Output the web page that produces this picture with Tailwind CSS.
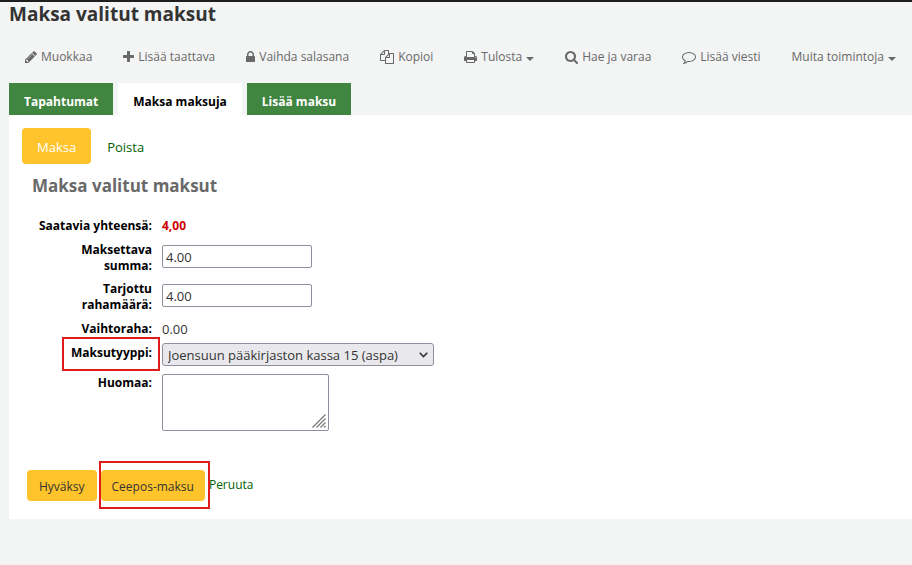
<!DOCTYPE html>
<html lang="fi">
<head>
<meta charset="utf-8">
<meta name="viewport" content="width=device-width, initial-scale=1">
<title>Maksa valitut maksut</title>
<script src="https://cdn.jsdelivr.net/npm/@tailwindcss/browser@4"></script>
</head>
<body class="min-h-screen border-t-2 border-[#1e1e1e] bg-[#f3f4f4] pl-[9px] font-['Open_Sans','Noto_Sans',sans-serif] text-[13px] leading-4 text-[#333]">
<h1 class="text-[19px] leading-6 font-bold">Maksa valitut maksut</h1>

<nav aria-label="Toiminnot" class="mt-[21px] flex gap-[31px] pl-4 text-xs leading-5 whitespace-nowrap text-[#696969]">
  <a href="#" class="flex items-center gap-1"><svg class="h-[14px] w-3" viewBox="128 0 1536 1792" fill="currentColor" aria-hidden="true"><path d="M491 1536l91-91-235-235-91 91v107h128v128h107zm523-928q0-22-22-22-10 0-17 7l-542 542q-7 7-7 17 0 22 22 22 10 0 17-7l542-542q7-7 7-17zm-54-192l416 416-832 832h-416v-416zm683 96q0 53-37 90l-166 166-416-416 166-165q36-38 90-38 53 0 91 38l235 234q37 39 37 91z"/></svg>Muokkaa</a>
  <a href="#" class="flex items-center gap-1"><svg class="h-[14px] w-[11px]" viewBox="192 0 1408 1792" fill="currentColor" aria-hidden="true"><path d="M1600 736v192q0 40-28 68t-68 28h-416v416q0 40-28 68t-68 28h-192q-40 0-68-28t-28-68v-416h-416q-40 0-68-28t-28-68v-192q0-40 28-68t68-28h416v-416q0-40 28-68t68-28h192q40 0 68 28t28 68v416h416q40 0 68 28t28 68z"/></svg>Lisää taattava</a>
  <a href="#" class="flex items-center gap-1"><svg class="h-[14px] w-[9px]" viewBox="320 0 1152 1792" fill="currentColor" aria-hidden="true"><path d="M640 768h512v-192q0-106-75-181t-181-75-181 75-75 181v192zm832 96v576q0 40-28 68t-68 28h-960q-40 0-68-28t-28-68v-576q0-40 28-68t68-28h32v-192q0-184 132-316t316-132 316 132 132 316v192h32q40 0 68 28t28 68z"/></svg>Vaihda salasana</a>
  <a href="#" class="flex items-center gap-1"><svg class="size-[14px]" viewBox="0 0 1792 1792" fill="currentColor" aria-hidden="true"><path d="M1696 384q40 0 68 28t28 68v1216q0 40-28 68t-68 28h-960q-40 0-68-28t-28-68v-288h-544q-40 0-68-28t-28-68v-672q0-40 20-88t48-76l408-408q28-28 76-48t88-20h416q40 0 68 28t28 68v328q68-40 128-40h416zm-544 213l-299 299h299v-299zm-640-384l-299 299h299v-299zm196 647l316-316v-416h-384v416q0 40-28 68t-68 28h-416v640h512v-256q0-40 20-88t48-76zm956 804v-1152h-384v416q0 40-28 68t-68 28h-416v640h896z"/></svg>Kopioi</a>
  <a href="#" class="flex items-center gap-1"><svg class="h-[14px] w-[13px]" viewBox="64 0 1664 1792" fill="currentColor" aria-hidden="true"><path d="M448 1536h896v-256h-896v256zm0-640h896v-384h-160q-40 0-68-28t-28-68v-160h-640v640zm1152 64q0-26-19-45t-45-19-45 19-19 45 19 45 45 19 45-19 19-45zm128 0v416q0 13-9.5 22.5t-22.5 9.5h-224v160q0 40-28 68t-68 28h-960q-40 0-68-28t-28-68v-160h-224q-13 0-22.5-9.5t-9.5-22.5v-416q0-79 56.5-135.5t135.5-56.5h64v-544q0-40 28-68t68-28h672q40 0 88 20t76 48l152 152q28 28 48 76t20 88v256h64q79 0 135.5 56.5t56.5 135.5z"/></svg>Tulosta<svg class="mt-1 h-1 w-2" viewBox="0 0 8 4" fill="currentColor" aria-hidden="true"><path d="M0 0h8L4 4z"/></svg></a>
  <a href="#" class="flex items-center gap-1"><svg class="h-[14px] w-[13px]" viewBox="64 0 1664 1792" fill="currentColor" aria-hidden="true"><path d="M1216 832q0-185-131.5-316.5t-316.5-131.5-316.5 131.5-131.5 316.5 131.5 316.5 316.5 131.5 316.5-131.5 131.5-316.5zm512 832q0 52-38 90t-90 38q-54 0-90-38l-343-342q-179 124-399 124-143 0-273.5-55.5t-225-150-150-225-55.5-273.5 55.5-273.5 150-225 225-150 273.5-55.5 273.5 55.5 225 150 150 225 55.5 273.5q0 220-124 399l343 343q37 37 37 90z"/></svg>Hae ja varaa</a>
  <a href="#" class="flex items-center gap-1"><svg class="size-[14px]" viewBox="0 0 1792 1792" fill="currentColor" aria-hidden="true"><path d="M896 384q-204 0-381.5 69.5t-282 187.5-104.5 255q0 112 71.5 213.5t201.5 175.5l87 50-27 96q-24 91-70 172 152-63 275-171l43-38 57 6q69 8 130 8 204 0 381.5-69.5t282-187.5 104.5-255-104.5-255-282-187.5-381.5-69.5zm896 512q0 174-120 321.5t-326 233-450 85.5q-70 0-145-8-198 175-460 242-49 14-114 22h-5q-15 0-27-10.5t-16-27.5v-1q-3-4-.5-12t2-10 4.5-9.5l6-9 7-8.5 8-9q7-8 31-34.5t34.5-38 31-39.5 32.5-51 27-59 26-76q-157-89-247.5-220t-90.5-281q0-130 71-248.5t191-204.5 286-136.5 348-50.5 348 50.5 286 136.5 191 204.5 71 248.5z"/></svg>Lisää viesti</a>
  <a href="#" class="flex items-center gap-1">Muita toimintoja<svg class="mt-1 h-1 w-2" viewBox="0 0 8 4" fill="currentColor" aria-hidden="true"><path d="M0 0h8L4 4z"/></svg></a>
</nav>

<nav aria-label="Maksut" class="mt-4 flex gap-[5px] text-xs leading-4 font-bold text-white">
  <a href="#" class="bg-[#408540] px-[15px] pt-[11px] pb-[5px]">Tapahtumat</a>
  <a href="#" class="bg-white px-[15px] pt-[11px] pb-[5px] text-black" aria-current="page">Maksa maksuja</a>
  <a href="#" class="bg-[#408540] px-[15px] pt-[11px] pb-[5px]">Lisää maksu</a>
</nav>

<main class="bg-white px-[13px] pt-[13px] pb-[18px]">
  <div class="flex items-center gap-4">
    <a href="#" class="rounded bg-[#ffc32b] px-[15px] pt-[11px] pb-[9px] text-white">Maksa</a>
    <a href="#" class="pt-[2px] text-[#006100]">Poista</a>
  </div>

  <form>
    <h2 class="mt-[10px] pl-[10px] text-[17px] leading-6 font-bold text-[#696969]">Maksa valitut maksut</h2>
    <div class="mt-5 grid grid-cols-[130px_1fr] gap-x-[10px] text-[#333]">
      <div class="pb-2 text-right text-xs leading-4 font-bold text-black">Saatavia yhteensä:</div>
      <div class="text-xs leading-4 font-bold text-[#c00]">4,00</div>

      <label for="paid" class="ml-auto w-[80px] pb-[7px] text-right text-xs leading-4 font-bold text-black">Maksettava summa:</label>
      <div><input id="paid" type="text" value="4.00" class="mt-[3px] block h-[23px] w-[150px] rounded-xs border border-[#8f8f9d] bg-white px-[3px] pt-px"></div>

      <label for="tendered" class="ml-auto w-[80px] pb-2 text-right text-xs leading-4 font-bold text-black">Tarjottu rahamäärä:</label>
      <div><input id="tendered" type="text" value="4.00" class="mt-[3px] block h-[23px] w-[150px] rounded-xs border border-[#8f8f9d] bg-white px-[3px] pt-px"></div>

      <div class="pb-2 text-right text-xs leading-4 font-bold text-black">Vaihtoraha:</div>
      <div>0.00</div>

      <div class="relative text-right text-xs leading-4 font-bold text-black"><label for="type">Maksutyyppi:</label>
        <span class="absolute -top-2 -right-2 h-[34px] w-[98px] border-2 border-[#e01b1b]"></span>
      </div>
      <div class="pb-[9px]">
        <div class="relative -mt-[2px] w-[272px]">
          <select id="type" class="block h-[23px] w-full appearance-none rounded-[3px] border border-[#8f8f9d] bg-[#e9e9ed] pt-px pr-6 pl-[5px] text-[#333]"><option>Joensuun pääkirjaston kassa 15 (aspa)</option></select>
          <svg class="pointer-events-none absolute top-[9px] right-[6px] h-[6px] w-[9px]" viewBox="0 0 9 6" fill="none" stroke="#333" stroke-width="1.6" aria-hidden="true"><path d="M.7.8l3.8 3.8L8.3.8"/></svg>
        </div>
      </div>

      <label for="note" class="text-right text-xs leading-4 font-bold text-black">Huomaa:</label>
      <div class="relative -mt-px w-[167px]">
        <textarea id="note" class="block h-[57px] w-full resize-none rounded-xs border border-[#8f8f9d] bg-white px-[3px]"></textarea>
        <svg class="pointer-events-none absolute right-[3px] bottom-[3px] size-[14px]" viewBox="0 0 14 14" fill="none" stroke="#777" stroke-width="1.2" aria-hidden="true"><path d="M.5 13.5l13-13M4.5 13.5l9-9M8.5 13.5l5-5M12 13.5l1.5-1.5"/></svg>
      </div>
    </div>

    <div class="mt-[39px] flex items-start gap-1 pl-[5px]">
      <button type="submit" class="rounded bg-[#ffc32b] px-3 pt-[9px] pb-[6px] text-xs leading-4 text-[#333]">Hyväksy</button>
      <div class="relative">
        <button type="button" class="rounded bg-[#ffc32b] px-[11px] pt-[9px] pb-[6px] text-xs leading-4 text-[#333]">Ceepos-maksu</button>
        <span class="pointer-events-none absolute -top-[9px] -right-[5px] -left-[2px] h-12 border-2 border-[#e01b1b]"></span>
      </div>
      <a href="#" class="pt-[7px] text-xs leading-4 text-[#006100]">Peruuta</a>
    </div>
  </form>
</main>
</body>
</html>
